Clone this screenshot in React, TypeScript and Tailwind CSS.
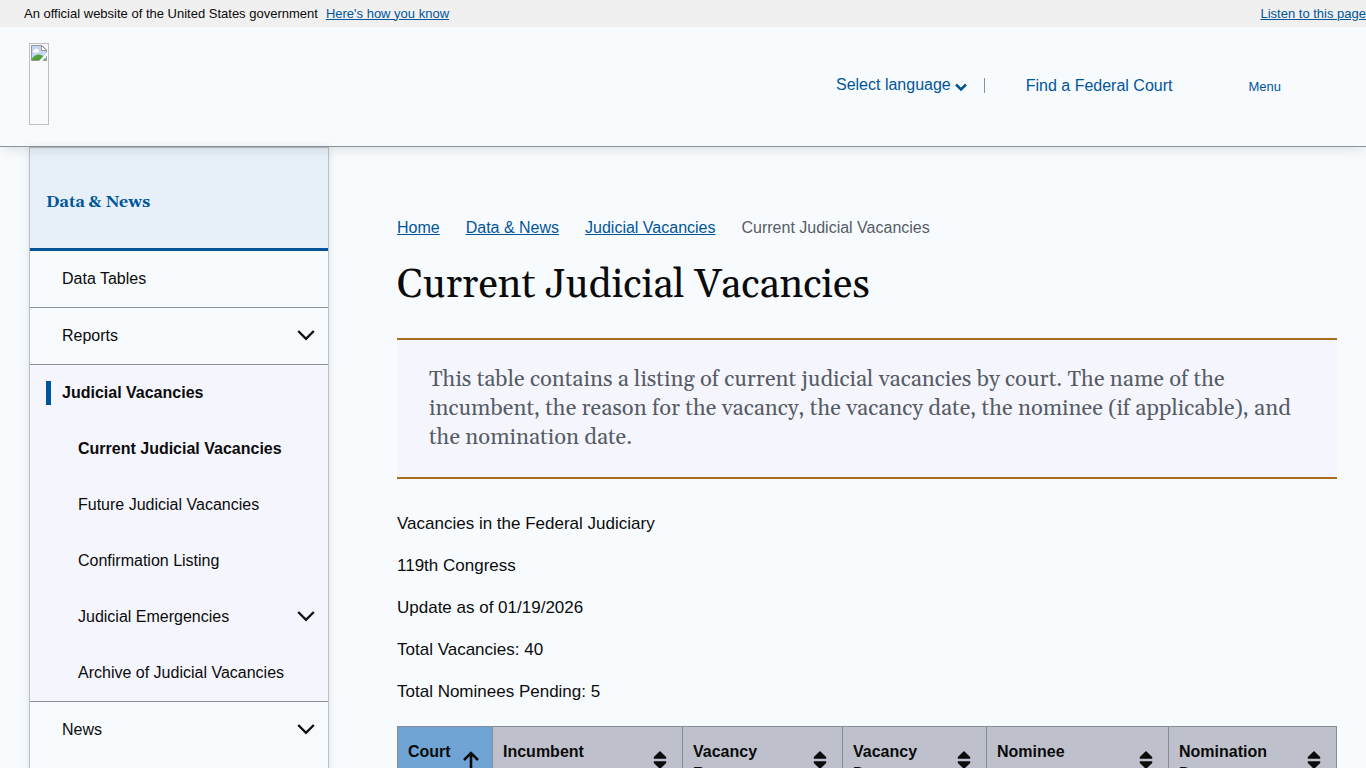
import React from "react";

const link = "text-[#00559a] underline";

function ChevronDown() {
  return (
    <svg className="h-[18px] w-[18px] shrink-0" viewBox="0 0 18 18" fill="none" stroke="#111" strokeWidth="2.4" aria-hidden="true">
      <path d="M1.2 4 L9 11.8 L16.8 4" />
    </svg>
  );
}

function BrokenImage() {
  return (
    <svg className="h-4 w-4" viewBox="0 0 16 16" role="img" aria-label="Home">
      <path d="M0.5 0.5H11L15.5 5V15.5H0.5Z" fill="#c5d5f4" stroke="#979797" />
      <path d="M3 7.5Q1.8 7.3 2 6Q2.4 5 3.5 5.1Q4.4 3.2 6.2 4Q8 4.2 7.8 5.8Q8.6 7.4 7 7.5Z" fill="#fff" />
      <path d="M1 15V13.5Q4 9.5 8 9.5Q11 9.7 13.5 12L15 15Z" fill="#4fa33b" />
      <path d="M8 16L16 7V10.5L11.5 16Z" fill="#f8fbfe" />
      <path d="M10.5 0.5V5.5H15.5Z" fill="#fff" stroke="#979797" />
    </svg>
  );
}

function SortIcon() {
  return (
    <svg className="h-5 w-[18px]" viewBox="0 0 18 20" fill="#0b0b0b" aria-hidden="true">
      <path d="M9 1L15.2 7V8.8H2.8V7Z" />
      <path d="M9 19L15.2 13V11.2H2.8V13Z" />
    </svg>
  );
}

function SortUpIcon() {
  return (
    <svg className="h-5 w-[18px]" viewBox="0 0 18 20" fill="none" stroke="#0b0b0b" strokeWidth="2.6" aria-hidden="true">
      <path d="M10 20V3M3 10L10 3L17 10" />
    </svg>
  );
}

function NavItem({ label, open }: { label: string; open?: boolean }) {
  return (
    <li className="flex h-[57px] items-center justify-between border-b border-[#8b9199] pr-[13px] pl-8 last:border-transparent">
      <a href="#">{label}</a>
      {open !== undefined && (
        <button aria-expanded={open} aria-label={`Expand ${label}`}>
          <ChevronDown />
        </button>
      )}
    </li>
  );
}

const children = [
  { label: "Current Judicial Vacancies", current: true },
  { label: "Future Judicial Vacancies" },
  { label: "Confirmation Listing" },
  { label: "Judicial Emergencies", more: true },
  { label: "Archive of Judicial Vacancies" },
];

const columns = [
  { label: "Court", width: "w-[95px]", sorted: true },
  { label: "Incumbent", width: "w-[190px]" },
  { label: "Vacancy Reason", width: "w-[160px]" },
  { label: "Vacancy Date", width: "w-[144px]" },
  { label: "Nominee", width: "w-[182px]" },
  { label: "Nomination Date", width: "w-[168px]" },
];

const facts = [
  "Vacancies in the Federal Judiciary",
  "119th Congress",
  "Update as of 01/19/2026",
  "Total Vacancies: 40",
  "Total Nominees Pending: 5",
];

export default function App() {
  return (
    <div className="flex min-h-screen flex-col bg-[#f8fbfe] font-['Liberation_Sans',Arial,sans-serif] text-base text-[#0b0b0b]">
      <div className="relative z-10 flex h-[27px] items-center justify-between bg-[#f0f0f0] pl-6 text-[13px]">
        <p>
          An official website of the United States government
          <button className={`ml-2 ${link}`}>Here's how you know</button>
        </p>
        <a href="#" className={link}>Listen to this page</a>
      </div>

      <header className="relative flex h-[120px] items-center justify-between border-b border-[#8b9199] pr-[85px] pb-0.5 pl-[29px] shadow-[0_5px_12px_-3px_rgba(0,0,0,0.12)]">
        <a href="#" className="-mt-1 flex h-[82px] w-5 justify-center border border-[#c0c0c0] pt-px">
          <BrokenImage />
        </a>
        <div className="flex items-center text-[#00559a]">
          <button className="flex items-center gap-1 pb-0.5">
            Select language
            <svg className="mt-1 h-3 w-3" viewBox="0 0 12 12" fill="none" stroke="#00559a" strokeWidth="2.6" aria-hidden="true">
              <path d="M1 3.5L6 8.5L11 3.5" />
            </svg>
          </button>
          <span className="ml-[17px] h-[15px] w-px bg-[#8b9199]" />
          <a href="#" className="ml-[41px]">Find a Federal Court</a>
          <button className="ml-[76px] pt-0.5 text-[13px]">Menu</button>
        </div>
      </header>

      <div className="flex flex-1 gap-[68px] px-[29px]">
        <nav aria-label="Section" className="w-[300px] shrink-0 border-x border-t border-[#b9bec5] shadow-[0_0_8px_rgba(0,0,0,0.1)]">
          <div className="flex h-[103px] items-center border-b-3 border-[#00559a] bg-[#e7f0f8] px-4 pt-2">
            <a href="#" className="font-[Georgia,Gelasio,'Liberation_Serif',serif] font-bold text-[#00559a]">Data &amp; News</a>
          </div>
          <ul>
            <NavItem label="Data Tables" />
            <NavItem label="Reports" open={false} />
            <li className="border-b border-[#8b9199] bg-[#f5f6fd]">
              <div className="flex h-14 items-center pl-4">
                <a href="#" className="border-l-5 border-[#00559a] pl-[11px] font-bold">Judicial Vacancies</a>
              </div>
              <ul>
                {children.map((c) => (
                  <li key={c.label} className="flex h-14 items-center justify-between pr-[13px] pl-12">
                    <a href="#" className={c.current ? "font-bold" : ""}>{c.label}</a>
                    {c.more && (
                      <button aria-label={`Expand ${c.label}`}>
                        <ChevronDown />
                      </button>
                    )}
                  </li>
                ))}
              </ul>
            </li>
            <NavItem label="News" open={false} />
          </ul>
        </nav>

        <main className="min-w-0 flex-1 pt-[69px]">
          <nav aria-label="Breadcrumb">
            <ol className="flex gap-[26px]">
              <li><a href="#" className={link}>Home</a></li>
              <li><a href="#" className={link}>Data &amp; News</a></li>
              <li><a href="#" className={link}>Judicial Vacancies</a></li>
              <li className="text-[#565c65]">Current Judicial Vacancies</li>
            </ol>
          </nav>
          <h1 className="mt-[22px] font-[Georgia,Gelasio,'Liberation_Serif',serif] text-[40px] leading-[48px]">Current Judicial Vacancies</h1>
          <p className="mt-7 border-y-2 border-[#a86e1c] bg-[#f5f6fd] px-8 pt-[26px] pb-6 font-[Georgia,Gelasio,'Liberation_Serif',serif] text-[22px] leading-[29px] text-[#565c65]">
            This table contains a listing of current judicial vacancies by court. The name of the incumbent, the reason for the vacancy, the vacancy date, the nominee (if applicable), and the nomination date.
          </p>
          <div className="mt-8 flex flex-col gap-4 text-[17px] leading-[26px]">
            {facts.map((f) => (
              <p key={f}>{f}</p>
            ))}
          </div>
          <table className="mt-[21px] w-full table-fixed border-collapse text-left leading-[22px]">
            <thead>
              <tr>
                {columns.map((c) => (
                  <th
                    key={c.label}
                    scope="col"
                    aria-sort={c.sorted ? "ascending" : undefined}
                    className={`${c.width} ${c.sorted ? "bg-[#6fa4d4]" : "bg-[#bec1cc]"} border border-[#858c96] pt-[14px] pr-[13px] pb-4 pl-[10px] align-top font-bold`}
                  >
                    <div className="flex items-start justify-between gap-2">
                      <span className="min-w-0">{c.label}</span>
                      <button className="mt-[9px] shrink-0" aria-label={`Sort by ${c.label}`}>
                        {c.sorted ? <SortUpIcon /> : <SortIcon />}
                      </button>
                    </div>
                  </th>
                ))}
              </tr>
            </thead>
          </table>
        </main>
      </div>
    </div>
  );
}
